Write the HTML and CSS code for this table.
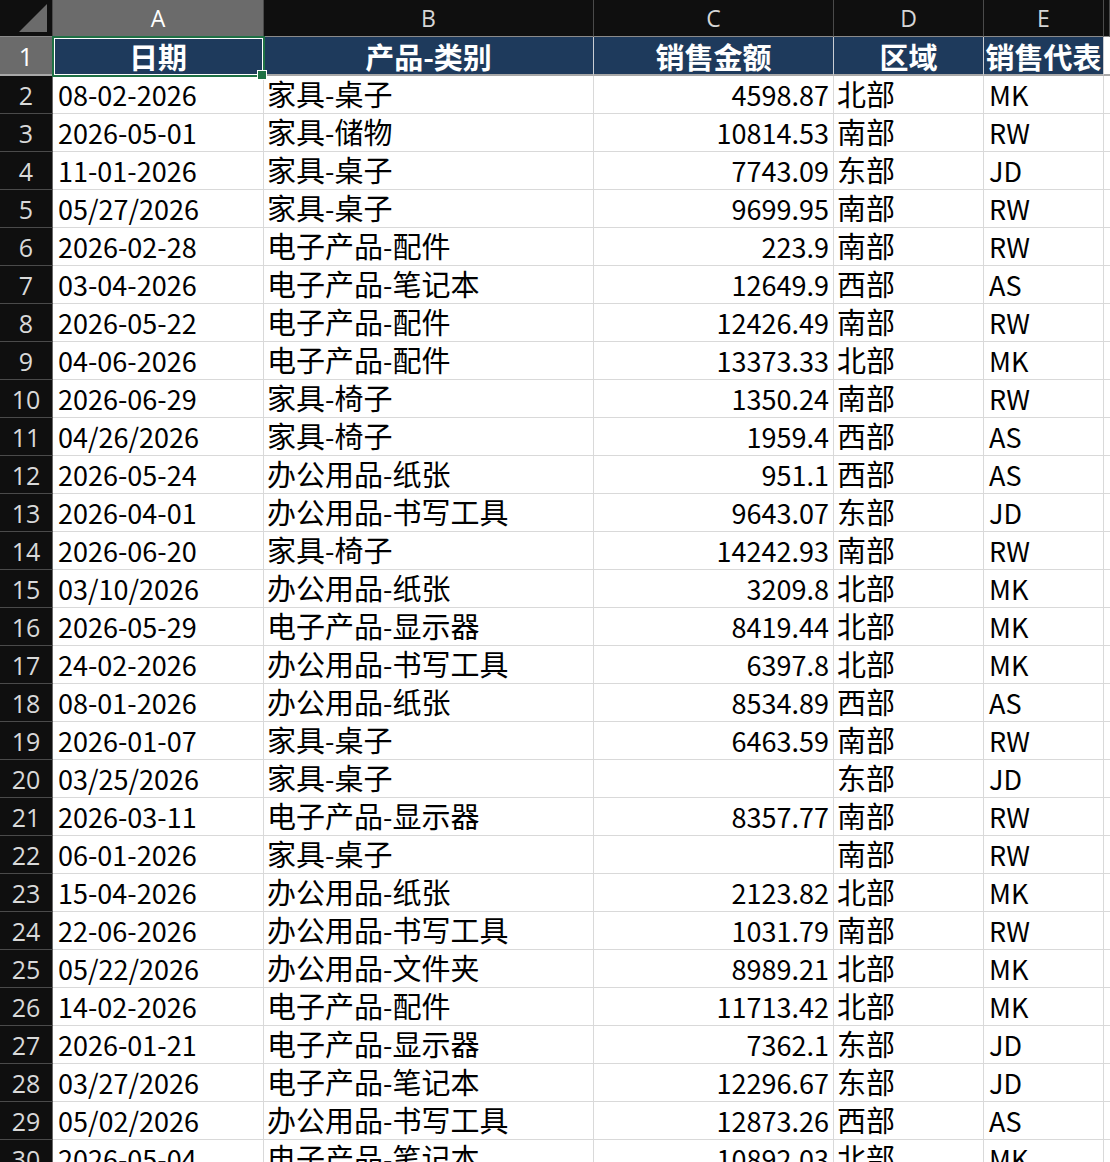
FILE: index.html
```html
<!DOCTYPE html>
<html lang="zh-CN">
<head>
<meta charset="utf-8">
<title>Sheet</title>
<link rel="stylesheet" href="styles.css">
</head>
<body>
<div class="sheet">
  <div class="row colheads">
    <div class="corner"><span class="tri"></span></div>
    <div class="ch sel">A</div>
    <div class="ch">B</div>
    <div class="ch">C</div>
    <div class="ch">D</div>
    <div class="ch">E</div>
    <div class="ch"></div>
  </div>
  <div class="row hdr">
    <div class="rn sel">1</div>
    <div class="h">日期</div>
    <div class="h">产品-类别</div>
    <div class="h">销售金额</div>
    <div class="h">区域</div>
    <div class="h">销售代表</div>
    <div class="c"></div>
  </div>
  <div id="rows"></div>
  <div class="selbox"></div>
  <div class="handle"></div>
</div>
<script src="app.js"></script>
</body>
</html>
```
FILE: app.js
```js
const data = [
["08-02-2026","家具-桌子","4598.87","北部","MK"],
["2026-05-01","家具-储物","10814.53","南部","RW"],
["11-01-2026","家具-桌子","7743.09","东部","JD"],
["05/27/2026","家具-桌子","9699.95","南部","RW"],
["2026-02-28","电子产品-配件","223.9","南部","RW"],
["03-04-2026","电子产品-笔记本","12649.9","西部","AS"],
["2026-05-22","电子产品-配件","12426.49","南部","RW"],
["04-06-2026","电子产品-配件","13373.33","北部","MK"],
["2026-06-29","家具-椅子","1350.24","南部","RW"],
["04/26/2026","家具-椅子","1959.4","西部","AS"],
["2026-05-24","办公用品-纸张","951.1","西部","AS"],
["2026-04-01","办公用品-书写工具","9643.07","东部","JD"],
["2026-06-20","家具-椅子","14242.93","南部","RW"],
["03/10/2026","办公用品-纸张","3209.8","北部","MK"],
["2026-05-29","电子产品-显示器","8419.44","北部","MK"],
["24-02-2026","办公用品-书写工具","6397.8","北部","MK"],
["08-01-2026","办公用品-纸张","8534.89","西部","AS"],
["2026-01-07","家具-桌子","6463.59","南部","RW"],
["03/25/2026","家具-桌子","","东部","JD"],
["2026-03-11","电子产品-显示器","8357.77","南部","RW"],
["06-01-2026","家具-桌子","","南部","RW"],
["15-04-2026","办公用品-纸张","2123.82","北部","MK"],
["22-06-2026","办公用品-书写工具","1031.79","南部","RW"],
["05/22/2026","办公用品-文件夹","8989.21","北部","MK"],
["14-02-2026","电子产品-配件","11713.42","北部","MK"],
["2026-01-21","电子产品-显示器","7362.1","东部","JD"],
["03/27/2026","电子产品-笔记本","12296.67","东部","JD"],
["05/02/2026","办公用品-书写工具","12873.26","西部","AS"],
["2026-05-04","电子产品-笔记本","10892.03","北部","MK"]
];
function fill(el, txt) {
  const parts = txt.split(/([\u4e00-\u9fff]+)/);
  parts.forEach(p => {
    if (!p) return;
    if (/[\u4e00-\u9fff]/.test(p)) {
      const s = document.createElement("span");
      s.className = "cjk";
      s.textContent = p;
      el.appendChild(s);
    } else {
      el.appendChild(document.createTextNode(p));
    }
  });
}
const host = document.getElementById("rows");
data.forEach((r, i) => {
  const row = document.createElement("div");
  row.className = "row data";
  const cells = [
    ["rn", String(i + 2)],
    ["c", r[0]],
    ["c", r[1]],
    ["c num", r[2]],
    ["c", r[3]],
    ["c", r[4]],
    ["c", ""]
  ];
  cells.forEach(([cls, txt]) => {
    const d = document.createElement("div");
    d.className = cls;
    fill(d, txt);
    row.appendChild(d);
  });
  host.appendChild(row);
});
```
FILE: styles.css
```css
html, body {
  margin: 0;
  padding: 0;
  background: #ffffff;
  overflow: hidden;
}
body {
  width: 1110px;
  height: 1162px;
  font-family: "Noto Sans CJK SC", "Open Sans", sans-serif;
}
.sheet {
  position: relative;
  width: 1110px;
}
.row {
  display: grid;
  grid-template-columns: 53px 211px 330px 240px 150px 120px 1fr;
}
.row > div {
  box-sizing: border-box;
  white-space: nowrap;
  min-width: 0;
}
.colheads {
  height: 37px;
}
.colheads > div {
  background: #0f0f0f;
  border-right: 1px solid #4a4a4a;
  border-bottom: 1px solid #8a8a8a;
  color: #d6d6d6;
  font-size: 23px;
  display: flex;
  align-items: center;
  justify-content: center;
  font-family: "Open Sans", sans-serif;
}
.colheads > .ch.sel {
  background: #6b6b6b;
  color: #ffffff;
}
.corner {
  position: relative;
}
.tri {
  position: absolute;
  right: 5px;
  bottom: 4px;
  width: 0;
  height: 0;
  border-left: 28px solid transparent;
  border-bottom: 28px solid #6b6b6b;
}
.hdr {
  height: 39px;
}
.hdr > div {
  border-bottom: 2px solid #a8a8a8;
}
.hdr > .h {
  background: #1e3a5c;
  color: #ffffff;
  font-weight: 700;
  font-size: 29px;
  line-height: 36px;
  border-right: 1px solid #c9cdd3;
  display: flex;
  align-items: center;
  justify-content: center;
  padding-top: 1px;
}
.hdr > .c {
  background: #ffffff;
}
.rn {
  background: #0f0f0f;
  color: #d9d9d9;
  font-size: 25px;
  font-family: "Open Sans", sans-serif;
  border-right: 1px solid #6a6a6a;
  border-bottom: 1px solid #4a4a4a;
  display: flex;
  align-items: center;
  justify-content: center;
}
.rn.sel {
  background: #6b6b6b;
  color: #ffffff;
  border-bottom: 2px solid #a8a8a8;
}
.data {
  height: 38px;
}
.data > .c {
  border-right: 1px solid #d9d9d9;
  border-bottom: 1px solid #d9d9d9;
  color: #000000;
  font-size: 27px;
  line-height: 37px;
  padding: 0 4px 0 5px;
}
.data > .c .cjk {
  font-size: 29px;
  line-height: 30px;
}
.data > .c .cjk:first-child {
  margin-left: -2px;
}
.data > .num {
  text-align: right;
}
.selbox {
  position: absolute;
  left: 52px;
  top: 36px;
  width: 213px;
  height: 41px;
  box-sizing: border-box;
  border: 2px solid #1e7145;
  box-shadow: inset 0 0 0 1px #ffffff;
  pointer-events: none;
}
.handle {
  position: absolute;
  left: 258px;
  top: 71px;
  width: 8px;
  height: 8px;
  background: #1e7145;
  box-shadow: 0 0 0 1px #ffffff;
}
```
